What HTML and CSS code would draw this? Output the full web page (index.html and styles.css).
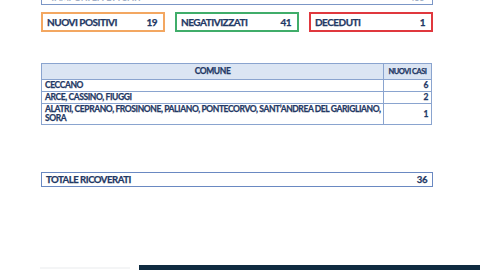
FILE: index.html
```html
<!DOCTYPE html>
<html>
<head>
<meta charset="utf-8">
<link rel="stylesheet" href="styles.css">
</head>
<body>
<div class="page">
  <div class="topbox">
    <span class="faint">TAMPONI EFFETTUATI</span>
    <span class="faint">436</span>
  </div>
  <div class="stats">
    <div class="stat orange"><span>NUOVI POSITIVI</span><span>19</span></div>
    <div class="stat green"><span>NEGATIVIZZATI</span><span>41</span></div>
    <div class="stat red"><span>DECEDUTI</span><span>1</span></div>
  </div>
  <table class="comuni">
    <tr class="head"><th class="c1">COMUNE</th><th class="c2">NUOVI CASI</th></tr>
    <tr><td class="c1">CECCANO</td><td class="c2">6</td></tr>
    <tr><td class="c1">ARCE, CASSINO, FIUGGI</td><td class="c2">2</td></tr>
    <tr><td class="c1">ALATRI, CEPRANO, FROSINONE, PALIANO, PONTECORVO, SANT’ANDREA DEL GARIGLIANO, SORA</td><td class="c2">1</td></tr>
  </table>
  <div class="total"><span>TOTALE RICOVERATI</span><span>36</span></div>
</div>
<div class="footer">
  <div class="greyline"></div>
  <div class="navy"></div>
</div>
</body>
</html>
```
FILE: styles.css
```css
html, body {
  margin: 0;
  padding: 0;
  background: #fff;
  width: 480px;
  height: 270px;
  overflow: hidden;
}
body {
  font-family: Lato, "Open Sans", sans-serif;
  font-weight: 700;
  color: #1f3864;
  -webkit-text-stroke: 0.25px #1f3864;
  display: flex;
  flex-direction: column;
}
.page {
  padding-left: 41px;
  width: 392px;
  display: flex;
  flex-direction: column;
  flex: none;
}
.topbox {
  height: 4px;
  flex: none;
  overflow: hidden;
  border: 1px solid #7b96c6;
  border-top: none;
  display: flex;
  justify-content: space-between;
  align-items: flex-start;
  padding: 0 8px;
  font-size: 9px;
  letter-spacing: -0.3px;
}
.faint {
  color: #a3b0c6;
  -webkit-text-stroke: 0;
  line-height: 10px;
  margin-top: -7px;
}
.stats {
  margin-top: 7px;
  display: grid;
  grid-template-columns: repeat(3, 1fr);
  gap: 10px;
}
.stat {
  height: 16px;
  border: 2px solid;
  display: flex;
  justify-content: space-between;
  align-items: center;
  padding: 0 6px 0 4px;
  font-size: 10px;
  letter-spacing: -0.5px;
}
.orange { border-color: #f3a761; }
.green { border-color: #40ad6a; }
.red { border-color: #e0383e; }
.comuni {
  margin-top: 31px;
  width: 391px;
  border-collapse: collapse;
  font-size: 8.5px;
  letter-spacing: -0.4px;
}
.comuni th, .comuni td {
  border: 1px solid #8aa4cf;
  padding: 1px 3px;
  line-height: 9px;
}
.comuni .head th {
  background: #dbe5f3;
  height: 13px;
  font-weight: 700;
}
.comuni td { height: 9px; }
.comuni th.c1 { text-align: center; }
.comuni td.c1 { text-align: left; padding-right: 2px; }
.comuni .c2 { width: 41px; text-align: right; }
.comuni th.c2 { text-align: center; padding: 1px 0; white-space: nowrap; font-size: 7.5px; letter-spacing: -0.5px; }
.total {
  margin-top: 47px;
  height: 13px;
  border: 1px solid #6a89c2;
  display: flex;
  justify-content: space-between;
  align-items: center;
  padding: 0 5px 0 4px;
  font-size: 9.6px;
  letter-spacing: -0.5px;
}
.footer {
  margin-top: auto;
  display: flex;
  align-items: flex-end;
  height: 6px;
}
.greyline {
  margin-left: 40px;
  width: 90px;
  height: 2px;
  margin-bottom: 1px;
  background: #f4f5f6;
}
.navy {
  margin-left: 9px;
  flex: 1;
  height: 5px;
  background: #0f2b40;
}
```
